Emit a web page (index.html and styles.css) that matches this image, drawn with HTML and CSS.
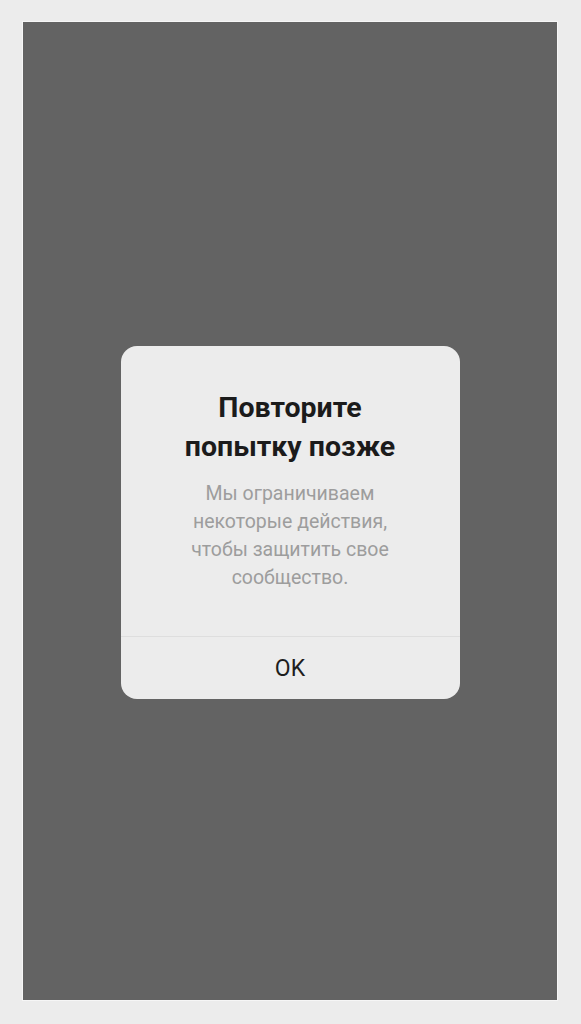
FILE: index.html
```html
<!DOCTYPE html>
<html lang="ru">
<head>
<meta charset="utf-8">
<link rel="stylesheet" href="styles.css">
</head>
<body>
<div class="frame">
  <div class="screen">
    <div class="dialog">
      <div class="content">
        <h1 class="title">Повторите<br>попытку позже</h1>
        <p class="message">Мы ограничиваем<br>некоторые действия,<br>чтобы защитить свое<br>сообщество.</p>
      </div>
      <div class="actions">
        <button class="ok">OK</button>
      </div>
    </div>
  </div>
</div>
</body>
</html>
```

FILE: styles.css
```css
html, body {
  margin: 0;
  padding: 0;
  background: #ececec;
}
.frame {
  width: 581px;
  height: 1024px;
  box-sizing: border-box;
  padding: 22px 24px 24px 23px;
  font-family: Roboto, "Noto Sans", sans-serif;
}
.screen {
  width: 534px;
  height: 978px;
  background: #636363;
  box-shadow: 0 0 0 1px #f6f6f6;
  box-sizing: border-box;
  padding-top: 324px;
  display: flex;
  flex-direction: column;
  align-items: center;
}
.dialog {
  width: 339px;
  height: 353px;
  background: #ececec;
  border-radius: 16px;
  display: flex;
  flex-direction: column;
  overflow: hidden;
}
.content {
  flex: 1;
  padding-top: 42px;
  text-align: center;
}
.title {
  margin: 0;
  font-size: 28.5px;
  line-height: 39px;
  font-weight: 700;
  color: #1b1b1b;
}
.message {
  margin: 14px 0 0;
  font-size: 19.5px;
  line-height: 28px;
  color: #9d9d9d;
}
.actions {
  height: 62px;
  border-top: 1px solid #dedede;
  display: flex;
  align-items: center;
  justify-content: center;
}
.ok {
  background: none;
  border: 0;
  padding: 0;
  font-family: Roboto, "Noto Sans", sans-serif;
  font-size: 23px;
  color: #1e1e1e;
}
```
